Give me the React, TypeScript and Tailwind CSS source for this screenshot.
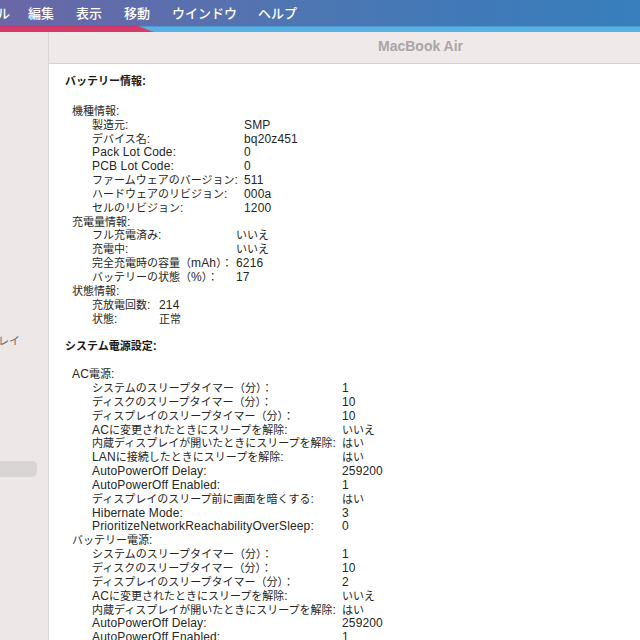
import React from "react";

const LAT = "font-['Liberation_Sans',Arial,sans-serif] text-[12px] tracking-[0.15px]";
const LINE = "h-[13.85px] leading-[13.85px] whitespace-nowrap";

function T({ s }: { s: string }) {
  const parts = s.split(/([\x00-\x7F]+)/).filter((p) => p.length > 0);
  return (
    <>
      {parts.map((p, i) =>
        /^[\x00-\x7F]+$/.test(p) ? (
          <span key={i} className={LAT}>
            {p}
          </span>
        ) : (
          <span key={i}>{p}</span>
        )
      )}
    </>
  );
}

type Row = [string, string];

function Group({ title, keyW, rows, mt }: { title: string; keyW: string; rows: Row[]; mt?: string }) {
  return (
    <div className={mt ?? ""}>
      <div className={`${LINE} ml-[7px]`}>
        <T s={title} />
      </div>
      {rows.map(([k, v], i) => (
        <div key={i} className={`${LINE} flex ml-[27px]`}>
          <div className={`${keyW} shrink-0`}>
            <T s={k} />
          </div>
          <div>
            <T s={v} />
          </div>
        </div>
      ))}
    </div>
  );
}

export default function App() {
  return (
    <div className="w-[640px] h-[640px] overflow-hidden bg-white font-['Noto_Sans_CJK_JP',sans-serif]">
      {/* menu bar */}
      <div className="h-[26px] flex items-center text-white text-[13px] font-medium bg-[linear-gradient(90deg,#6a67a6_0%,#5d6eac_25%,#4c77b3_50%,#4079b8_75%,#387fbd_100%)]">
        <span className="ml-[-3px]">ル</span>
        <span className="ml-[18px]">編集</span>
        <span className="ml-[22px]">表示</span>
        <span className="ml-[22px]">移動</span>
        <span className="ml-[22px]">ウインドウ</span>
        <span className="ml-[21px]">ヘルプ</span>
      </div>
      {/* wallpaper strip */}
      <svg width="640" height="6" className="block" viewBox="0 0 640 6">
        <rect x="0" y="0" width="640" height="6" fill="#58b1e3" />
        <rect x="0" y="0" width="640" height="1" fill="#4e9bd0" />
        <polygon points="0,0 138,0 154,6 0,6" fill="#d63a68" />
        <polygon points="0,0 138,0 140,1 0,1" fill="#c23a6e" />
      </svg>
      {/* window */}
      <div className="flex h-[608px]">
        <div className="w-[49px] shrink-0 bg-[#ede7e7] border-r border-[#dbd5d5] overflow-hidden flex flex-col">
          <div className="mt-[301px] ml-[-13px] text-[11px] leading-[14px] h-[14px] text-[#6e6a6a] whitespace-nowrap">
            プレイ
          </div>
          <div className="mt-[114px] w-[37px] h-[16px] rounded-r-[5px] bg-[#dad5d5]" />
        </div>
        <div className="flex-1 flex flex-col min-w-0">
          <div className="h-[32px] shrink-0 bg-[#efe9e9] border-b border-[#d6d1d1] pt-[6px] pl-[329px]">
            <div className="font-['Liberation_Sans',Arial,sans-serif] font-bold text-[14px] leading-[16px] text-[#aaa5a5]">
              MacBook Air
            </div>
          </div>
          <div className="flex-1 bg-white pl-[16px] pt-[10px] text-[11px] leading-[13.85px] text-[#262626]">
            <div className={`${LINE} font-bold text-[#1a1a1a]`}>
              <T s="バッテリー情報:" />
            </div>
            <Group
              mt="mt-[16px]"
              title="機種情報:"
              keyW="w-[152px]"
              rows={[
                ["製造元:", "SMP"],
                ["デバイス名:", "bq20z451"],
                ["Pack Lot Code:", "0"],
                ["PCB Lot Code:", "0"],
                ["ファームウェアのバージョン:", "511"],
                ["ハードウェアのリビジョン:", "000a"],
                ["セルのリビジョン:", "1200"],
              ]}
            />
            <Group
              title="充電量情報:"
              keyW="w-[144px]"
              rows={[
                ["フル充電済み:", "いいえ"],
                ["充電中:", "いいえ"],
                ["完全充電時の容量（mAh）：", "6216"],
                ["バッテリーの状態（%）：", "17"],
              ]}
            />
            <Group
              title="状態情報:"
              keyW="w-[67px]"
              rows={[
                ["充放電回数:", "214"],
                ["状態:", "正常"],
              ]}
            />
            <div className={`${LINE} mt-[14px] font-bold text-[#1a1a1a]`}>
              <T s="システム電源設定:" />
            </div>
            <Group
              mt="mt-[14px]"
              title="AC電源:"
              keyW="w-[250px]"
              rows={[
                ["システムのスリープタイマー（分）：", "1"],
                ["ディスクのスリープタイマー（分）：", "10"],
                ["ディスプレイのスリープタイマー（分）：", "10"],
                ["ACに変更されたときにスリープを解除:", "いいえ"],
                ["内蔵ディスプレイが開いたときにスリープを解除:", "はい"],
                ["LANに接続したときにスリープを解除:", "はい"],
                ["AutoPowerOff Delay:", "259200"],
                ["AutoPowerOff Enabled:", "1"],
                ["ディスプレイのスリープ前に画面を暗くする:", "はい"],
                ["Hibernate Mode:", "3"],
                ["PrioritizeNetworkReachabilityOverSleep:", "0"],
              ]}
            />
            <Group
              title="バッテリー電源:"
              keyW="w-[250px]"
              rows={[
                ["システムのスリープタイマー（分）：", "1"],
                ["ディスクのスリープタイマー（分）：", "10"],
                ["ディスプレイのスリープタイマー（分）：", "2"],
                ["ACに変更されたときにスリープを解除:", "いいえ"],
                ["内蔵ディスプレイが開いたときにスリープを解除:", "はい"],
                ["AutoPowerOff Delay:", "259200"],
                ["AutoPowerOff Enabled:", "1"],
              ]}
            />
          </div>
        </div>
      </div>
    </div>
  );
}
